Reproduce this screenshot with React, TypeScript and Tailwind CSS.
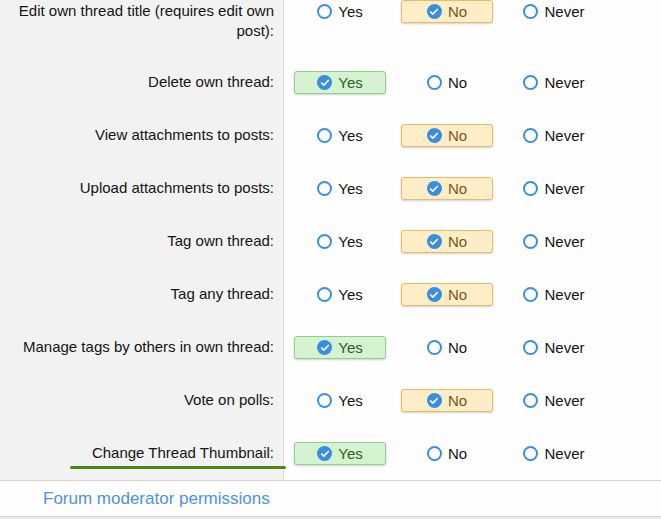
import { Check } from "lucide-react";

type Choice = "yes" | "no" | "never";

const ROWS: { label: string; value: Choice; mark?: boolean }[] = [
  { label: "Edit own thread title (requires edit own post):", value: "no" },
  { label: "Delete own thread:", value: "yes" },
  { label: "View attachments to posts:", value: "no" },
  { label: "Upload attachments to posts:", value: "no" },
  { label: "Tag own thread:", value: "no" },
  { label: "Tag any thread:", value: "no" },
  { label: "Manage tags by others in own thread:", value: "yes" },
  { label: "Vote on polls:", value: "no" },
  { label: "Change Thread Thumbnail:", value: "yes", mark: true },
];

const OPTIONS: { key: Choice; text: string }[] = [
  { key: "yes", text: "Yes" },
  { key: "no", text: "No" },
  { key: "never", text: "Never" },
];

function Option({ text, selected, kind }: { text: string; selected: boolean; kind: Choice }) {
  const box = selected
    ? kind === "yes"
      ? "bg-[#d5f2d1] border-[#8fd189] text-[#2f5e28] shadow-[0_1px_2px_rgba(0,0,0,0.18)]"
      : "bg-[#fdeec8] border-[#efb964] text-[#7b5520] shadow-[0_1px_2px_rgba(0,0,0,0.18)]"
    : "border-transparent text-[#141414]";
  return (
    <div className={`w-[92px] h-[23px] rounded-[3px] border flex items-center justify-center gap-[6px] ${box}`}>
      {selected ? (
        <span className="w-[15px] h-[15px] rounded-full bg-[#3a8ee0] flex items-center justify-center">
          <Check className="w-[10px] h-[10px] text-white" strokeWidth={4} />
        </span>
      ) : (
        <span className="w-[15px] h-[15px] rounded-full border-2 border-[#3a8ee0] bg-white" />
      )}
      <span className="text-[15px] leading-5">{text}</span>
    </div>
  );
}

export default function App() {
  return (
    <div className="w-[661px] h-[519px] overflow-hidden bg-[#e9e9e9] font-['Liberation_Sans',Arial,sans-serif]">
      <div className="-mt-[15px]">
        {ROWS.map(row => (
          <div key={row.label} className="flex">
            <div className="relative w-[284px] shrink-0 bg-[#f2f2f2] border-r border-[#dadada] pl-[12px] pr-[9px] pt-[16px] pb-[15px] text-right text-[15px] leading-5 text-[#141414]">
              {row.label}
              {row.mark && (
                <div className="absolute left-[70px] right-[-3px] bottom-[11px] h-[3px] rounded-full bg-[#4b8a12]" />
              )}
            </div>
            <div className="flex-1 bg-[#fefefe] pl-[10px] py-[15px] flex gap-[15px] items-start">
              {OPTIONS.map(o => (
                <Option key={o.key} text={o.text} kind={o.key} selected={row.value === o.key} />
              ))}
            </div>
          </div>
        ))}
      </div>
      <div className="border-t border-b border-[#d4d4d4] bg-[#fefefe] h-[37px] flex items-center pl-[43px]">
        <span className="text-[17px] text-[#4d92e3]">Forum moderator permissions</span>
      </div>
    </div>
  );
}
